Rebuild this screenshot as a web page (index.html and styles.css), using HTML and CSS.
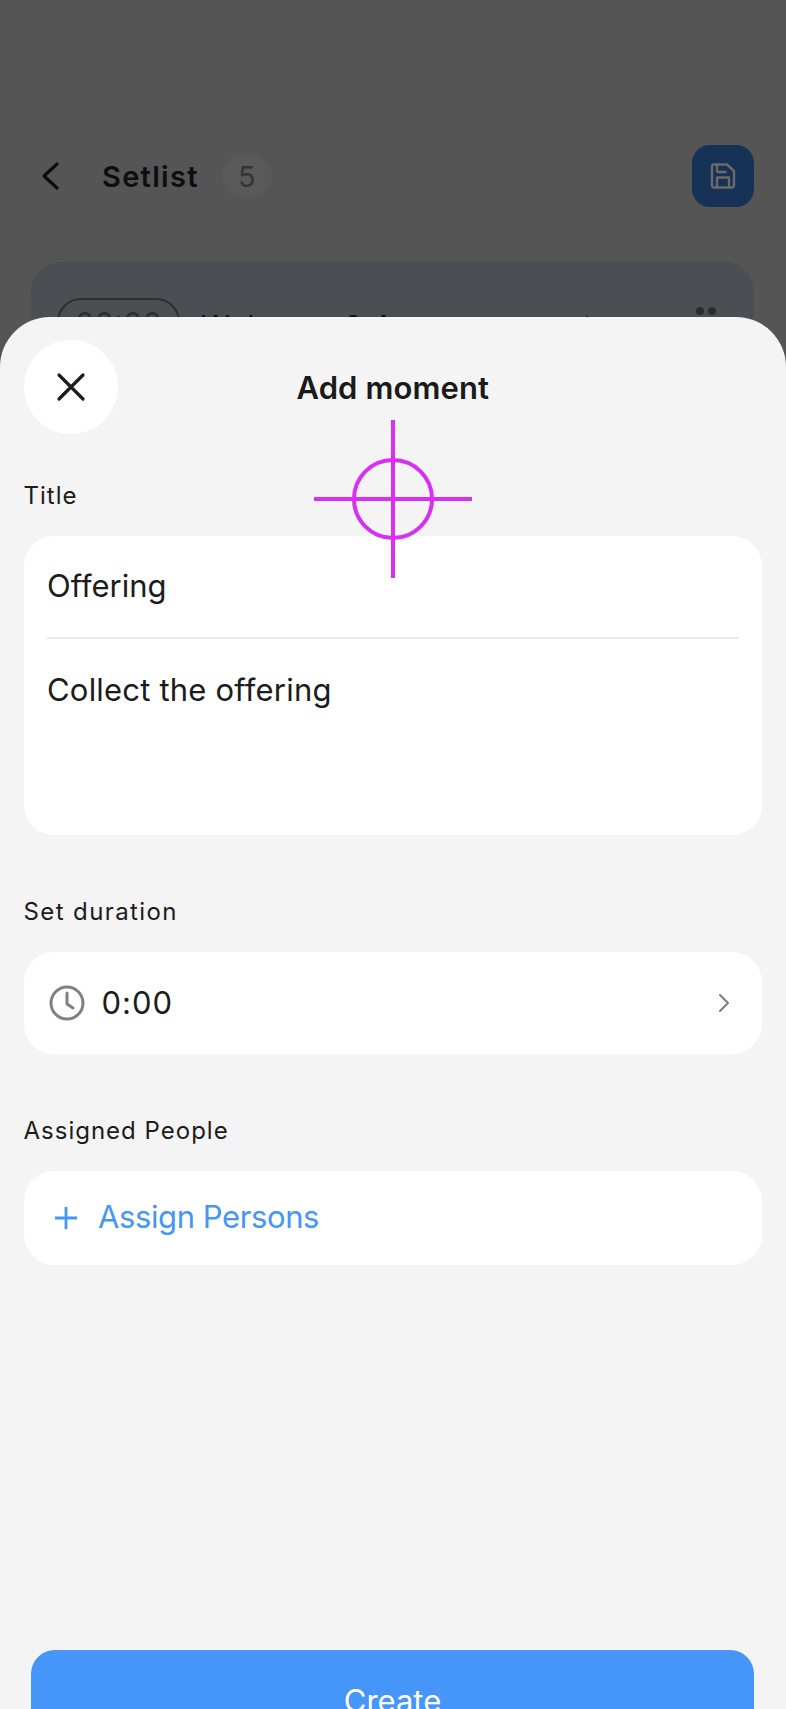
FILE: index.html
```html
<!DOCTYPE html>
<html lang="en">
<head>
	<meta charset="utf-8">
	<title>Add moment</title>
	<link rel="stylesheet" href="styles.css">
</head>
<body>
<div class="screen">
	<header class="topbar">
		<svg class="back" viewBox="0 0 18 28" width="18" height="28"><path d="M16 2 3 14l13 12" fill="none" stroke="#0c0c0c" stroke-width="3.2" stroke-linecap="round" stroke-linejoin="round"/></svg>
		<h2 class="topbar-title">Setlist</h2>
		<span class="count">5</span>
		<button class="save" type="button">
			<svg viewBox="0 0 26 26" width="26" height="26" fill="none" stroke="#6a6a6a" stroke-width="2.4" stroke-linejoin="round"><path d="M3 1.5h14l7 6.500v14a2.500 2.500 0 0 1-2.500 2.500h-17a2.500 2.500 0 0 1-2.500-2.500v-18a2.500 2.500 0 0 1 1-2.500z"/><path d="M7 2v5.500a1.500 1.500 0 0 0 1.500 1.500h8"/><path d="M7 24v-9.500h12v9.500"/></svg>
		</button>
	</header>
	<div class="moment">
		<span class="time">00:00</span>
		<span class="moment-name">Welcome &amp; Announcements</span>
		<span class="dots"><i></i><i></i></span>
	</div>
</div>

<section class="sheet">
	<div class="sheet-head">
		<button class="close" type="button">
			<svg viewBox="0 0 30 30" width="30" height="30"><path d="M3 3l24 24M27 3 3 27" stroke="#1c1c1c" stroke-width="3.200" stroke-linecap="round"/></svg>
		</button>
		<h1 class="sheet-title">Add moment</h1>
	</div>

	<p class="label label-title">Title</p>
	<div class="card text-card">
		<div class="line line-name">Offering</div>
		<div class="line line-desc">Collect the offering</div>
	</div>

	<p class="label label-duration">Set duration</p>
	<div class="card row duration">
		<svg class="clock" viewBox="0 0 36 36" width="36" height="36" fill="none" stroke="#808080" stroke-width="3" stroke-linecap="round" stroke-linejoin="round"><circle cx="18" cy="18" r="16"/><path d="M18 8v11l6 4"/></svg>
		<span class="value">0:00</span>
		<svg class="chevron" viewBox="0 0 12 20" width="12" height="20"><path d="M2 2l8 8-8 8" fill="none" stroke="#7c7c7c" stroke-width="2" stroke-linecap="round" stroke-linejoin="round"/></svg>
	</div>

	<p class="label label-people">Assigned People</p>
	<div class="card row assign">
		<svg class="plus" viewBox="0 0 24 24" width="24" height="24"><path d="M12 1v22M1 12h22" stroke="#4695f9" stroke-width="2.800"/></svg>
		<span class="assign-text">Assign Persons</span>
	</div>

	<button class="create" type="button">Create</button>
</section>

<svg class="crosshair" viewBox="0 0 158 158" width="158" height="158" fill="none" stroke="#d92ff5" stroke-width="4"><circle cx="79" cy="79" r="39"/><path d="M79 0v158M0 79h158"/></svg>
</body>
</html>
```
FILE: styles.css
```css
html, body{
	margin: 0;
	height: 1709px;
	overflow: hidden;
}
body{
	position: relative;
	background: #555;
	font-family: Inter, "Liberation Sans", sans-serif;
	color: #1c1c1c;
}
h1, h2, p{
	margin: 0;
}
button{
	font: inherit;
	border: 0;
	padding: 0;
}

/* page behind the sheet */
.screen{
	padding: 145px 32px 0 31px;
}
.topbar{
	display: flex;
	align-items: center;
	height: 62px;
}
.back{
	margin-left: 10px;
}
.topbar-title{
	margin-left: 43px;
	font-size: 29px;
	font-weight: 600;
	letter-spacing: 1.3px;
	color: #0e0e0e;
}
.count{
	display: flex;
	align-items: center;
	justify-content: center;
	width: 50px;
	height: 46px;
	margin-left: 23px;
	border-radius: 50%;
	background: #595959;
	color: #343434;
	font-size: 29px;
}
.save{
	display: flex;
	align-items: center;
	justify-content: center;
	width: 62px;
	height: 62px;
	margin-left: auto;
	border-radius: 18px;
	background: #163256;
}
.moment{
	display: flex;
	align-items: flex-start;
	height: 200px;
	margin-top: 55px;
	padding: 36px 38px 36px 26px;
	border-radius: 30px;
	background: #4b4f53;
}
.time{
	padding: 5px 16px;
	border: 2px solid #2e2e2e;
	border-radius: 24px;
	font-size: 31px;
	color: #2e2e2e;
}
.moment-name{
	margin-left: 21px;
	padding-top: 10px;
	font-size: 29px;
	letter-spacing: 1px;
	color: #0e0e0e;
}
.dots{
	display: flex;
	gap: 4px;
	margin-left: auto;
	margin-top: 9px;
}
.dots i{
	width: 8px;
	height: 8px;
	border-radius: 50%;
	background: #2c2c2c;
}

/* bottom sheet */
.sheet{
	position: absolute;
	left: 0;
	right: 0;
	top: 317px;
	height: 1392px;
	box-sizing: border-box;
	padding: 23px 24px 0 23.500px;
	border-radius: 50px 50px 0 0;
	background: #f4f4f4;
	overflow: hidden;
}
.sheet-head{
	position: relative;
	display: flex;
	justify-content: center;
	align-items: center;
	height: 94px;
}
.close{
	position: absolute;
	left: 0;
	top: 0;
	display: flex;
	align-items: center;
	justify-content: center;
	width: 94px;
	height: 94px;
	border-radius: 50%;
	background: #fff;
}
.sheet-title{
	font-size: 31px;
	font-weight: 600;
	letter-spacing: 0.1px;
	color: #1a1a1a;
}
.label{
	font-size: 24px;
	line-height: 30px;
	letter-spacing: 1px;
	color: #1c1c1c;
}
.label-title{
	margin-top: 47px;
}
.label-duration{
	margin-top: 62px;
	letter-spacing: 1.400px;
}
.label-people{
	margin-top: 62px;
}
.card{
	margin-top: 25px;
	border-radius: 30px;
	background: #fff;
}
.text-card{
	height: 299px;
	padding: 0 24px 0 23.500px;
}
.line{
	font-size: 31px;
	line-height: 40px;
}
.line-name{
	height: 103px;
	box-sizing: border-box;
	padding-top: 30px;
	border-bottom: 2px solid #e9e9ee;
}
.line-desc{
	padding-top: 31px;
	letter-spacing: 0.2px;
}
.row{
	display: flex;
	align-items: center;
}
.duration{
	height: 102px;
	padding: 0 32px 0 25px;
}
.value{
	margin: -2px 0 0 17px;
	font-size: 31px;
	letter-spacing: 1px;
}
.chevron{
	margin-left: auto;
}
.assign{
	height: 94px;
	padding-left: 30.500px;
}
.assign-text{
	margin: -3px 0 0 20px;
	font-size: 31px;
	letter-spacing: -0.4px;
	color: #4695f9;
}
.create{
	display: block;
	width: 723px;
	height: 100px;
	margin: 385px 0 0 7.500px;
	border-radius: 24px;
	background: #4695f9;
	color: #fff;
	font-size: 31px;
}
.crosshair{
	position: absolute;
	left: 314px;
	top: 420px;
}
```
